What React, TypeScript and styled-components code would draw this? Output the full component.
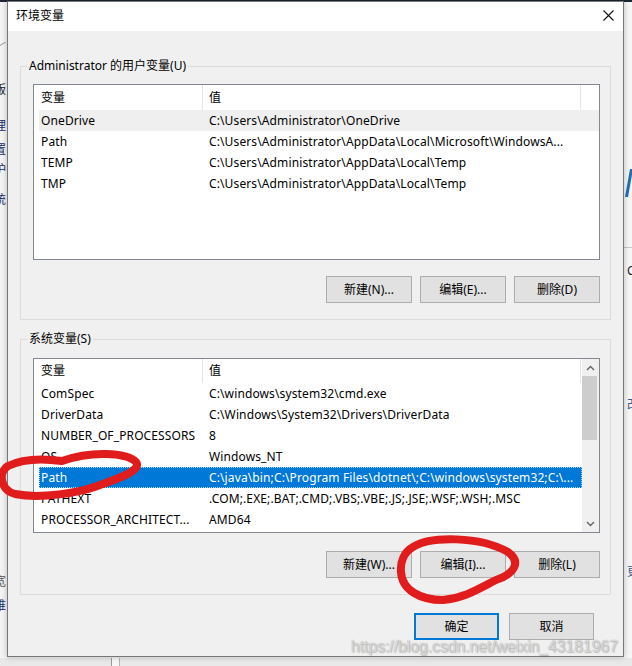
import React from 'react';
import styled, { createGlobalStyle } from 'styled-components';

const Global = createGlobalStyle`
  html, body { margin: 0; padding: 0; }
  body {
    width: 632px; height: 666px; overflow: hidden;
    background: #ececec;
    font-family: "Noto Sans", "Noto Sans CJK SC", sans-serif;
    font-size: 12px;
    color: #000;
  }
  * { box-sizing: border-box; }
`;

const Desktop = styled.div`
  position: relative;
  width: 632px;
  height: 666px;
  overflow: hidden;
`;

/* ---------- background window (partly hidden) ---------- */
const BackWindow = styled.div`
  position: absolute;
  inset: 0;
  display: flex;
  flex-direction: column;
  background: #f2f2f2;
`;
const TopStrip = styled.div`
  height: 2px;
  background: #1d2633;
`;
const BackBody = styled.div`
  flex: 1;
  display: flex;
`;
const BottomBar = styled.div`
  height: 8px;
  display: flex;
  background: #e9e9e9;
`;
const BottomDivider = styled.div`
  margin-left: 111px;
  width: 9px;
  border-left: 1px solid #9a9a9a;
  border-right: 1px solid #b4b4b4;
  background: #f7f7f7;
`;
const LeftPane = styled.div`
  width: 7px;
  overflow: hidden;
  display: flex;
  flex-direction: column;
  background: #f4f4f4;
`;
const BgChar = styled.span<{ $mt: number; $color?: string }>`
  display: block;
  margin-top: ${p => p.$mt}px;
  margin-left: -6px;
  height: 16px;
  line-height: 16px;
  font-size: 12px;
  white-space: nowrap;
  color: ${p => p.$color || '#1c2a6b'};
`;
const Spacer = styled.div`
  flex: 1;
`;
const RightPane = styled.div`
  width: 8px;
  overflow: hidden;
  display: flex;
  flex-direction: column;
  background: #f6f6f6;
`;
const RightRule = styled.div<{ $mt: number }>`
  margin-top: ${p => p.$mt}px;
  height: 1px;
  background: #c8c8c8;
`;
const RightChar = styled.span<{ $mt: number; $color?: string }>`
  display: block;
  margin-top: ${p => p.$mt}px;
  margin-left: 3px;
  height: 16px;
  line-height: 16px;
  white-space: nowrap;
  color: ${p => p.$color || '#222'};
`;
const SlashMark = styled.svg`
  display: block;
  margin-top: 167px;
  margin-left: 1px;
`;

/* ---------- dialog window ---------- */
const Dialog = styled.div`
  position: absolute;
  left: 7px;
  top: 1px;
  width: 617px;
  display: flex;
  flex-direction: column;
  border: 1px solid #777;
  background: #f0f0f0;
  box-shadow: 0 0 6px rgba(0, 0, 0, 0.25);
`;
const TitleBar = styled.div`
  height: 29px;
  display: flex;
  align-items: center;
  justify-content: space-between;
  padding: 0 9px 2px 8px;
  background: #fff;
`;
const Title = styled.span`
  font-size: 12px;
  line-height: 16px;
`;
const Body = styled.div`
  display: flex;
  flex-direction: column;
  padding: 27px 12px 16px 12px;
`;
const Group = styled.fieldset<{ $pt: number; $pb: number; $mt?: number }>`
  margin: ${p => p.$mt || 0}px 0 0 0;
  min-width: 0;
  padding: ${p => p.$pt}px 10px ${p => p.$pb}px 12px;
  border: 1px solid #dcdcdc;
  display: flex;
  flex-direction: column;
`;
const Legend = styled.legend`
  margin-left: -6px;
  padding: 0 2px;
  font-size: 12px;
  line-height: 16px;
`;
const ListBox = styled.div<{ $h: number }>`
  height: ${p => p.$h}px;
  border: 1px solid #828790;
  background: #fff;
  display: flex;
  overflow: hidden;
`;
const ListContent = styled.div`
  flex: 1;
  padding-left: 5px;
  display: flex;
  flex-direction: column;
  overflow: hidden;
  letter-spacing: 0.12px;
`;
const HeaderRow = styled.div<{ $h: number }>`
  display: grid;
  grid-template-columns: 164px 378px;
  height: ${p => p.$h}px;
  flex-shrink: 0;
`;
const HeaderCell = styled.div<{ $col: 1 | 2 }>`
  display: flex;
  align-items: center;
  padding-left: ${p => (p.$col === 1 ? 2 : 6)}px;
  border-right: 1px solid #e5e5e5;
  line-height: 16px;
`;
const Row = styled.div<{ $state?: 'hover' | 'selected' }>`
  display: grid;
  grid-template-columns: 164px 378px;
  height: 21px;
  flex-shrink: 0;
  align-items: center;
  line-height: 16px;
  background: ${p =>
    p.$state === 'selected' ? '#0078d7' : p.$state === 'hover' ? '#efefef' : 'transparent'};
  color: ${p => (p.$state === 'selected' ? '#fff' : '#000')};
  outline: ${p => (p.$state === 'selected' ? '1px dotted #a8d4f7' : 'none')};
  outline-offset: -1px;
`;
const Cell = styled.span<{ $col: 1 | 2 }>`
  padding-left: ${p => (p.$col === 1 ? 2 : 6)}px;
  white-space: nowrap;
  overflow: hidden;
`;
const ScrollBar = styled.div`
  width: 17px;
  display: flex;
  flex-direction: column;
  background: #f0f0f0;
`;
const ScrollArrow = styled.div`
  height: 17px;
  display: flex;
  align-items: center;
  justify-content: center;
`;
const ScrollThumb = styled.div`
  height: 64px;
  margin: 0 2px 0 0;
  background: #cdcdcd;
`;
const ButtonRow = styled.div<{ $mt: number }>`
  display: flex;
  justify-content: flex-end;
  gap: 8px;
  margin-top: ${p => p.$mt}px;
`;
const Button = styled.button<{ $w?: number; $default?: boolean }>`
  width: ${p => p.$w || 86}px;
  height: 27px;
  padding: 0;
  margin: 0;
  background: #e1e1e1;
  border: ${p => (p.$default ? '2px solid #0078d7' : '1px solid #adadad')};
  font-family: "Noto Sans", "Noto Sans CJK SC", sans-serif;
  font-size: 12px;
  line-height: 16px;
  color: #000;
  display: flex;
  align-items: center;
  justify-content: center;
`;
const Footer = styled.div`
  display: flex;
  justify-content: flex-end;
  gap: 10px;
  margin-top: 18px;
  padding-right: 17px;
`;

/* ---------- overlays ---------- */
const Scribbles = styled.svg`
  position: absolute;
  left: 0;
  top: 0;
  pointer-events: none;
`;
const Watermark = styled.div`
  position: absolute;
  left: 351px;
  top: 638px;
  font-family: "Liberation Sans", Arial, sans-serif;
  font-size: 15.7px;
  line-height: 18px;
  white-space: nowrap;
  color: rgba(255, 255, 255, 0.65);
  text-shadow: 0 0 1px rgba(0, 0, 0, 0.4), 1px 1px 1px rgba(0, 0, 0, 0.18);
  pointer-events: none;
`;

type Item = { name: string; value: string; state?: 'hover' | 'selected' };

const userVars: Item[] = [
  { name: 'OneDrive', value: 'C:\\Users\\Administrator\\OneDrive', state: 'hover' },
  { name: 'Path', value: 'C:\\Users\\Administrator\\AppData\\Local\\Microsoft\\WindowsA...' },
  { name: 'TEMP', value: 'C:\\Users\\Administrator\\AppData\\Local\\Temp' },
  { name: 'TMP', value: 'C:\\Users\\Administrator\\AppData\\Local\\Temp' },
];

const systemVars: Item[] = [
  { name: 'ComSpec', value: 'C:\\windows\\system32\\cmd.exe' },
  { name: 'DriverData', value: 'C:\\Windows\\System32\\Drivers\\DriverData' },
  { name: 'NUMBER_OF_PROCESSORS', value: '8' },
  { name: 'OS', value: 'Windows_NT' },
  {
    name: 'Path',
    value: 'C:\\java\\bin;C:\\Program Files\\dotnet\\;C:\\windows\\system32;C:\\...',
    state: 'selected',
  },
  { name: 'PATHEXT', value: '.COM;.EXE;.BAT;.CMD;.VBS;.VBE;.JS;.JSE;.WSF;.WSH;.MSC' },
  { name: 'PROCESSOR_ARCHITECT...', value: 'AMD64' },
];

const Chevron = ({ up }: { up?: boolean }) => (
  <svg width="9" height="6" viewBox="0 0 9 6">
    <path
      d={up ? 'M1 5 L4.5 1.5 L8 5' : 'M1 1 L4.5 4.5 L8 1'}
      fill="none"
      stroke="#606060"
      strokeWidth="1.3"
    />
  </svg>
);

const VarList = ({
  items,
  height,
  headerH,
  scroll,
}: {
  items: Item[];
  height: number;
  headerH: number;
  scroll?: boolean;
}) => (
  <ListBox $h={height}>
    <ListContent>
      <HeaderRow $h={headerH}>
        <HeaderCell $col={1}>变量</HeaderCell>
        <HeaderCell $col={2}>值</HeaderCell>
      </HeaderRow>
      {items.map((it, i) => (
        <Row key={i} $state={it.state}>
          <Cell $col={1}>{it.name}</Cell>
          <Cell $col={2}>{it.value}</Cell>
        </Row>
      ))}
    </ListContent>
    {scroll && (
      <ScrollBar>
        <ScrollArrow>
          <Chevron up />
        </ScrollArrow>
        <ScrollThumb />
        <Spacer />
        <ScrollArrow>
          <Chevron />
        </ScrollArrow>
      </ScrollBar>
    )}
  </ListBox>
);

export default function App() {
  return (
    <Desktop>
      <Global />
      <BackWindow>
        <TopStrip />
        <BackBody>
          <LeftPane>
            <BgChar $mt={38} $color="#9a9a9a">﹀</BgChar>
            <BgChar $mt={26} $color="#222">版</BgChar>
            <BgChar $mt={20}>理</BgChar>
            <BgChar $mt={8}>置</BgChar>
            <BgChar $mt={4}>护</BgChar>
            <BgChar $mt={14}>统</BgChar>
            <BgChar $mt={366} $color="#555">宽</BgChar>
            <BgChar $mt={8}>维</BgChar>
          </LeftPane>
          <Spacer />
          <RightPane>
            <SlashMark width="7" height="28" viewBox="0 0 7 28">
              <path d="M6.5 0 L1.5 28" stroke="#1f6fb5" strokeWidth="3" />
            </SlashMark>
            <RightRule $mt={50} />
            <RightChar $mt={15}>C</RightChar>
            <RightChar $mt={118} $color="#3a5a8a">改</RightChar>
            <RightChar $mt={151} $color="#3a5a8a">更</RightChar>
          </RightPane>
        </BackBody>
        <BottomBar>
          <BottomDivider />
        </BottomBar>
      </BackWindow>

      <Dialog>
        <TitleBar>
          <Title>环境变量</Title>
          <svg width="11" height="11" viewBox="0 0 11 11">
            <path d="M0.5 0.5 L10.5 10.5 M10.5 0.5 L0.5 10.5" stroke="#111" strokeWidth="1.1" />
          </svg>
        </TitleBar>
        <Body>
          <Group $pt={10} $pb={16}>
            <Legend>Administrator 的用户变量(U)</Legend>
            <VarList items={userVars} height={176} headerH={25} />
            <ButtonRow $mt={16}>
              <Button>新建(N)...</Button>
              <Button>编辑(E)...</Button>
              <Button>删除(D)</Button>
            </ButtonRow>
          </Group>
          <Group $pt={11} $pb={16} $mt={11}>
            <Legend>系统变量(S)</Legend>
            <VarList items={systemVars} height={175} headerH={24} scroll />
            <ButtonRow $mt={18}>
              <Button>新建(W)...</Button>
              <Button>编辑(I)...</Button>
              <Button>删除(L)</Button>
            </ButtonRow>
          </Group>
          <Footer>
            <Button $w={85} $default>
              确定
            </Button>
            <Button $w={85}>取消</Button>
          </Footer>
        </Body>
      </Dialog>

      <Scribbles width="632" height="666" viewBox="0 0 632 666">
        <path
          d="M62 461 C90 451, 126 452, 136 462 C142 470, 120 478, 100 485 C80 493, 40 499, 15 494 C0 490, -2 472, 8 466 C20 460, 40 458, 62 461"
          fill="none"
          stroke="#e01c1c"
          strokeWidth="8"
          strokeLinecap="round"
        />
        <path
          d="M413 547 C430 536, 480 536, 508 552 C522 562, 514 574, 496 580 C480 588, 465 598, 443 600 C420 600, 402 590, 401 572 C400 562, 404 552, 413 547"
          fill="none"
          stroke="#e01c1c"
          strokeWidth="8"
          strokeLinecap="round"
        />
      </Scribbles>
      <Watermark>https://blog.csdn.net/weixin_43181967</Watermark>
    </Desktop>
  );
}
